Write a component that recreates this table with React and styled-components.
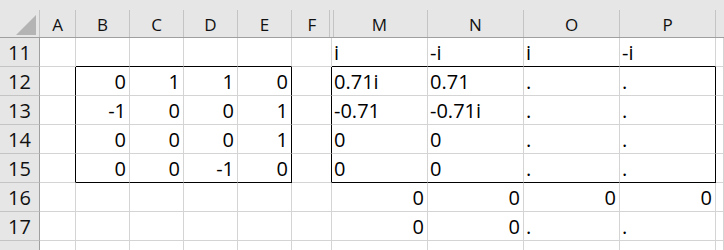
import React from 'react';
import styled, { createGlobalStyle } from 'styled-components';

const GlobalStyle = createGlobalStyle`
  html, body {
    margin: 0;
    padding: 0;
    background: #ffffff;
  }
  body {
    font-family: 'Open Sans', 'Noto Sans', sans-serif;
    color: #000000;
  }
`;

const COLS = ['A', 'B', 'C', 'D', 'E', 'F', 'M', 'N', 'O', 'P'];
const WIDTHS = '40px 36px 54px 54px 54px 54px 40px 96px 96px 96px 96px 1fr';

// framed ranges: rows 12-15, columns B..E and M..P
const BOXES = [
  { top: 12, bottom: 15, from: 'B', to: 'E' },
  { top: 12, bottom: 15, from: 'M', to: 'P' },
];

// the last row only peeks in at the bottom edge, its number stays below the fold
const ROWS = [
  { n: 11, cells: { M: 'i', N: '-i', O: 'i', P: '-i' } },
  { n: 12, cells: { B: 0, C: 1, D: 1, E: 0, M: '0.71i', N: '0.71', O: '.', P: '.' } },
  { n: 13, cells: { B: -1, C: 0, D: 0, E: 1, M: '-0.71', N: '-0.71i', O: '.', P: '.' } },
  { n: 14, cells: { B: 0, C: 0, D: 0, E: 1, M: '0', N: '0', O: '.', P: '.' } },
  { n: 15, cells: { B: 0, C: 0, D: -1, E: 0, M: '0', N: '0', O: '.', P: '.' } },
  { n: 16, cells: { M: 0, N: 0, O: 0, P: 0 } },
  { n: 17, cells: { M: 0, N: 0, O: '.', P: '.' } },
  { n: 18, cells: {}, partial: true },
];

const idx = c => COLS.indexOf(c);

const edgeRight = (row, col) =>
  BOXES.some(
    b =>
      row >= b.top &&
      row <= b.bottom &&
      (col === b.to || idx(col) === idx(b.from) - 1)
  );

const edgeBottom = (row, col) =>
  BOXES.some(
    b =>
      idx(col) >= idx(b.from) &&
      idx(col) <= idx(b.to) &&
      (row === b.top - 1 || row === b.bottom)
  );

export default function App() {
  return (
    <>
      <GlobalStyle />
      <Sheet>
        <HeaderRow>
          <Corner>
            <CornerMark />
          </Corner>
          {COLS.map(c => (
            <ColHead key={c} hiddenAfter={c === 'F'} hiddenBefore={c === 'M'}>
              {c}
            </ColHead>
          ))}
          <ColTail />
        </HeaderRow>
        {ROWS.map(r => (
          <Row key={r.n}>
            <RowHead>{r.partial ? null : r.n}</RowHead>
            {COLS.map(c => {
              const v = r.cells[c];
              return (
                <Cell
                  key={c}
                  numeric={typeof v === 'number'}
                  blackRight={edgeRight(r.n, c)}
                  blackBottom={edgeBottom(r.n, c)}
                >
                  {v}
                </Cell>
              );
            })}
            <Cell />
          </Row>
        ))}
      </Sheet>
    </>
  );
}

const Sheet = styled.div`
  width: 724px;
  height: 250px;
  overflow: hidden;
`;

const HeaderRow = styled.div`
  display: grid;
  grid-template-columns: ${WIDTHS};
  height: 38px;
  padding-top: 10px;
  box-sizing: border-box;
  background: #e6e6e6;
  border-bottom: 1px solid #9f9f9f;
`;

const Corner = styled.div`
  position: relative;
  border-right: 1px solid #c4c4c4;
`;

const CornerMark = styled.div`
  position: absolute;
  left: 16px;
  top: 5px;
  width: 20px;
  height: 20px;
  background: #b4b4b4;
  clip-path: polygon(100% 0, 100% 100%, 0 100%);
`;

const ColHead = styled.div`
  display: flex;
  justify-content: center;
  padding-top: 3px;
  line-height: 24px;
  font-size: 17px;
  color: #111111;
  border-right: ${p => (p.hiddenAfter ? 'none' : '1px solid #c4c4c4')};
  background: ${p =>
    p.hiddenAfter
      ? 'linear-gradient(to left, transparent 2px, #c4c4c4 2px, #c4c4c4 3px, transparent 3px)'
      : p.hiddenBefore
      ? 'linear-gradient(to right, transparent 1px, #c4c4c4 1px, #c4c4c4 2px, transparent 2px)'
      : 'none'};
`;

const ColTail = styled.div``;

const Row = styled.div`
  display: grid;
  grid-template-columns: ${WIDTHS};
  height: 29px;
`;

const RowHead = styled.div`
  display: flex;
  justify-content: center;
  box-sizing: border-box;
  padding-top: 2px;
  line-height: 26px;
  font-size: 20px;
  color: #111111;
  background: #e6e6e6;
  border-right: 1px solid #9f9f9f;
  border-bottom: 1px solid #c4c4c4;
`;

const Cell = styled.div`
  display: flex;
  justify-content: ${p => (p.numeric ? 'flex-end' : 'flex-start')};
  box-sizing: border-box;
  padding: 2px ${p => (p.numeric ? '3px' : '0')} 0 ${p => (p.numeric ? '0' : '2px')};
  line-height: 26px;
  font-size: 20px;
  white-space: nowrap;
  overflow: hidden;
  border-right: 1px solid ${p => (p.blackRight ? '#000000' : '#d4d4d4')};
  border-bottom: 1px solid ${p => (p.blackBottom ? '#000000' : '#d4d4d4')};
`;
